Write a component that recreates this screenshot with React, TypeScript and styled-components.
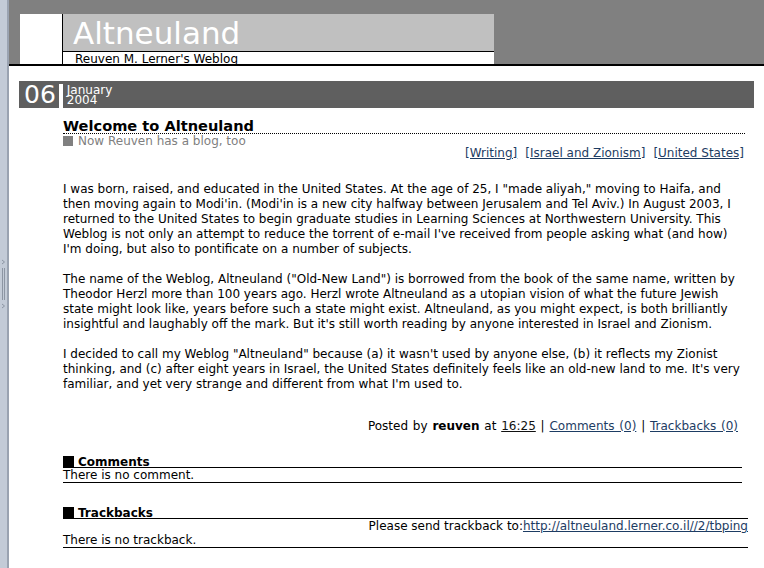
import React from "react";
import styled, { createGlobalStyle } from "styled-components";

const GlobalStyle = createGlobalStyle`
  html, body {
    margin: 0;
    padding: 0;
    background: #ffffff;
  }
  body {
    font-family: "DejaVu Sans", Verdana, sans-serif;
    font-size: 12px;
    color: #000;
  }
`;

const Shell = styled.div`
  display: flex;
  height: 568px;
  overflow: hidden;
`;

// frameset splitter on the far left
const FrameEdge = styled.div`
  width: 7px;
  flex: none;
  background: #c3cbd7;
  border-right: 2px solid #9aa3b1;
  display: flex;
  align-items: center;
  justify-content: center;
`;

const Page = styled.div`
  flex: 1;
  min-width: 0;
  overflow: hidden;
`;

const Masthead = styled.header`
  background: #808080;
  padding: 14px 0 0 11px;
  border-bottom: 2px solid #000;
  display: flex;
  align-items: stretch;
`;

const Corner = styled.div`
  width: 42px;
  background: #fff;
`;

const TitleBlock = styled.div`
  width: 431px;
  border-left: 1px solid #000;
  background: #fff;
`;

const TitleBar = styled.h1`
  margin: 0;
  height: 38px;
  box-sizing: border-box;
  padding: 1px 0 0 10px;
  background: #c0c0c0;
  border-bottom: 1px solid #000;
  color: #fff;
  font-size: 31px;
  font-weight: normal;
  line-height: 36px;
`;

const Tagline = styled.div`
  height: 12px;
  overflow: hidden;
  padding-left: 12px;
  font-size: 12px;
  line-height: 14px;
`;

const Main = styled.main`
  padding: 15px 10px 0 10px;
`;

const DateBar = styled.div`
  height: 27px;
  background: #5f5f5f;
  color: #fff;
  display: flex;
  align-items: flex-end;
`;

const Day = styled.span`
  font-size: 25px;
  line-height: 27px;
  padding: 0 3px 0 5px;
`;

const MonthYear = styled.span`
  align-self: stretch;
  margin-top: 3px;
  border-left: 4px solid #fff;
  padding: 1px 0 0 4px;
  font-size: 12px;
  line-height: 10px;
`;

const Post = styled.article`
  margin: 0 9px 0 44px;
`;

const PostTitle = styled.h2`
  margin: 10px 0 0;
  font-size: 14.6px;
  line-height: 15px;
  font-weight: bold;
  border-bottom: 1px dotted #000;
`;

const Summary = styled.div`
  color: #808080;
  font-size: 12px;
  line-height: 12px;
  padding-top: 1px;
  display: flex;
  align-items: center;
  gap: 5px;
`;

const Square = styled.span<{ $size: number; $color: string }>`
  display: inline-block;
  flex: none;
  width: ${(p) => p.$size}px;
  height: ${(p) => p.$size}px;
  background: ${(p) => p.$color};
`;

const Categories = styled.div`
  display: flex;
  justify-content: flex-end;
  gap: 8px;
  line-height: 12px;
  margin-right: 1px;
`;

const Link = styled.a<{ $dark?: boolean }>`
  color: ${(p) => (p.$dark ? "#111" : "#1d3c63")};
  text-decoration: underline;
`;

const Body = styled.div`
  margin-top: 23px;
  line-height: 15px;
  p {
    margin: 0 0 15px;
  }
`;

const PostedBy = styled.div`
  margin: 27px 7px 0 0;
  text-align: right;
  line-height: 15px;
  word-spacing: 1px;
`;

const Section = styled.section<{ $top: number; $right: number }>`
  margin: ${(p) => p.$top}px ${(p) => p.$right}px 0 0;
`;

const SectionHead = styled.h3`
  margin: 0;
  font-size: 12px;
  font-weight: bold;
  line-height: 10px;
  border-bottom: 1px solid #000;
  display: flex;
  align-items: flex-end;
  gap: 4px;
`;

const SectionRow = styled.div`
  line-height: 14px;
  text-align: right;
`;

const SectionEnd = styled.div`
  line-height: 14px;
  border-bottom: 1px solid #000;
`;

const SplitHandle = () => (
  <svg width="7" height="52" viewBox="0 0 7 52">
    <path d="M2 2 L4.5 4 L2 6" fill="none" stroke="#8c95a3" strokeWidth="1" />
    <line x1="2.5" y1="10" x2="2.5" y2="42" stroke="#8c95a3" />
    <line x1="4.5" y1="10" x2="4.5" y2="42" stroke="#8c95a3" />
    <path d="M2 46 L4.5 48 L2 50" fill="none" stroke="#8c95a3" strokeWidth="1" />
  </svg>
);

export default function App() {
  return (
    <>
      <GlobalStyle />
      <Shell>
        <FrameEdge>
          <SplitHandle />
        </FrameEdge>
        <Page>
          <Masthead>
            <Corner />
            <TitleBlock>
              <TitleBar>Altneuland</TitleBar>
              <Tagline>Reuven M. Lerner's Weblog</Tagline>
            </TitleBlock>
          </Masthead>
          <Main>
            <DateBar>
              <Day>06</Day>
              <MonthYear>
                January
                <br />
                2004
              </MonthYear>
            </DateBar>
            <Post>
              <PostTitle>Welcome to Altneuland</PostTitle>
              <Summary>
                <Square $size={10} $color="#808080" />
                Now Reuven has a blog, too
              </Summary>
              <Categories>
                <Link href="#">[Writing]</Link>
                <Link href="#">[Israel and Zionism]</Link>
                <Link href="#">[United States]</Link>
              </Categories>
              <Body>
                <p>
                  I was born, raised, and educated in the United States. At the age of 25, I "made
                  aliyah," moving to Haifa, and then moving again to Modi'in. (Modi'in is a new city
                  halfway between Jerusalem and Tel Aviv.) In August 2003, I returned to the United
                  States to begin graduate studies in Learning Sciences at Northwestern University.
                  This Weblog is not only an attempt to reduce the torrent of e-mail I've received
                  from people asking what (and how) I'm doing, but also to pontificate on a number of
                  subjects.
                </p>
                <p>
                  The name of the Weblog, Altneuland ("Old-New Land") is borrowed from the book of the
                  same name, written by Theodor Herzl more than 100 years ago. Herzl wrote Altneuland
                  as a utopian vision of what the future Jewish state might look like, years before
                  such a state might exist. Altneuland, as you might expect, is both brilliantly
                  insightful and laughably off the mark. But it's still worth reading by anyone
                  interested in Israel and Zionism.
                </p>
                <p>
                  I decided to call my Weblog "Altneuland" because (a) it wasn't used by anyone else,
                  (b) it reflects my Zionist thinking, and (c) after eight years in Israel, the United
                  States definitely feels like an old-new land to me. It's very familiar, and yet very
                  strange and different from what I'm used to.
                </p>
              </Body>
              <PostedBy>
                Posted by <b>reuven</b> at <Link href="#" $dark>16:25</Link> |{" "}
                <Link href="#">Comments (0)</Link> | <Link href="#">Trackbacks (0)</Link>
              </PostedBy>
              <Section $top={22} $right={3}>
                <SectionHead>
                  <Square $size={11} $color="#000" />
                  Comments
                </SectionHead>
                <SectionEnd>There is no comment.</SectionEnd>
              </Section>
              <Section $top={24} $right={-3}>
                <SectionHead>
                  <Square $size={11} $color="#000" />
                  Trackbacks
                </SectionHead>
                <SectionRow>
                  Please send trackback to:
                  <Link href="#">http://altneuland.lerner.co.il//2/tbping</Link>
                </SectionRow>
                <SectionEnd>There is no trackback.</SectionEnd>
              </Section>
            </Post>
          </Main>
        </Page>
      </Shell>
    </>
  );
}
